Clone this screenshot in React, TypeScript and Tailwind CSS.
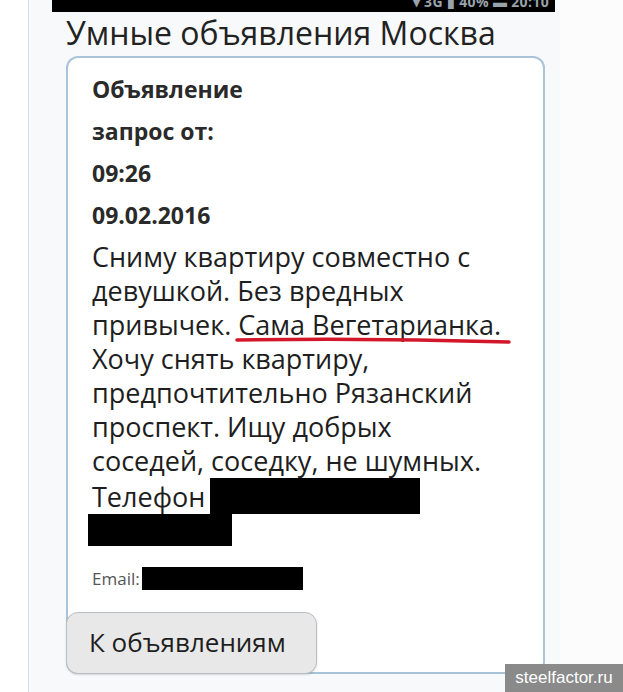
export default function App() {
  return (
    <div className="relative flex h-[692px] overflow-hidden bg-[#fcfcfc] font-['Open_Sans',sans-serif] text-[#1e1e1e]">
      <div className="w-[28px] shrink-0 bg-white" />

      {/* колонка страницы */}
      <div className="w-[532px] shrink-0 border-l border-[#cfe0ec] bg-[#f7f9fa]">
        {/* статус-бар телефона, обрезан сверху */}
        <div className="ml-[23px] h-[12px] w-[503px] overflow-hidden bg-black">
          <div className="-mt-[9px] pr-[6px] text-right text-[14px] font-bold tracking-wide text-[#9aa3ab]">
            ▾ 3G ▮ 40% ▬ 20:10
          </div>
        </div>

        <div className="pl-[37px] pr-[15px]">
          <h1 className="mt-[1px] text-[32px] leading-[40px] text-[#222]">Умные объявления Москва</h1>

          <div className="mt-[3px] h-[618px] rounded-[12px] border-2 border-[#a9c4d8] bg-white">
            <div className="pl-[24px] pt-[10px]">
              <div className="text-[23px] font-bold leading-[42px] text-[#2a2a2a]">
                <div>Объявление</div>
                <div>запрос от:</div>
                <div>09:26</div>
                <div>09.02.2016</div>
              </div>

              <div className="mt-[4px] text-[27px] leading-[34px] text-[#1e1e1e]">
                <div>Сниму квартиру совместно с</div>
                <div>девушкой. Без вредных</div>
                <div>
                  привычек.{' '}
                  <span className="relative">
                    Сама Вегетарианка.
                    <svg className="absolute left-[-3px] top-[31px]" width="276" height="8" viewBox="0 0 276 8">
                      <path d="M2 3 Q138 1 274 5" stroke="#d3172a" strokeWidth="3.5" fill="none" strokeLinecap="round" />
                    </svg>
                  </span>
                </div>
                <div>Хочу снять квартиру,</div>
                <div>предпочтительно Рязанский</div>
                <div>проспект. Ищу добрых</div>
                <div>соседей, соседку, не шумных.</div>
                <div className="flex items-end">
                  <span>Телефон</span>
                  <span className="ml-[5px] h-[36px] w-[210px] bg-black" />
                </div>
                <div className="-ml-[4px] h-[32px] w-[144px] bg-black" />
              </div>

              <div className="mt-[20px] flex items-center text-[17px] text-[#555]">
                <span>Email:</span>
                <span className="ml-[2px] h-[23px] w-[161px] bg-black" />
              </div>
            </div>

            <div className="mt-[20px] -ml-[2px]">
              <button className="h-[62px] w-[251px] rounded-[12px] border border-[#b9bec3] bg-[#e8e8e8] pl-[22px] text-left text-[26px] text-[#1e1e1e] shadow-[0_1px_2px_rgba(0,0,0,0.15)]">
                К объявлениям
              </button>
            </div>
          </div>
        </div>
      </div>

      {/* водяной знак */}
      <div className="absolute bottom-0 right-0 flex h-[28px] w-[118px] items-center justify-center bg-[#8a8a8a] font-['Liberation_Sans',Arial,sans-serif] text-[17px] text-white">
        steelfactor.ru
      </div>
    </div>
  );
}
